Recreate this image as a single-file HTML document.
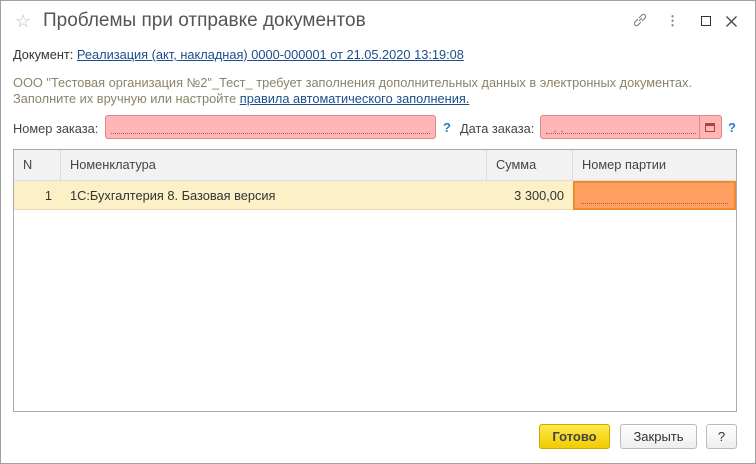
<!DOCTYPE html>
<html><head><meta charset="utf-8"><style>
*{box-sizing:border-box;margin:0;padding:0}
body{width:756px;height:464px;background:#fff;font-family:"Liberation Sans",Arial,sans-serif;font-size:12.8px;color:#333;position:relative;overflow:hidden}
.win{position:absolute;left:0;top:0;width:756px;height:464px;border:1px solid #a0a0a0}
.abs{position:absolute;white-space:nowrap}
a{color:#1c4d8c;text-decoration:underline}
.inp{position:absolute;background:#ffb6b6;border:1px solid #d88;border-radius:3px}
.inp i{position:absolute;left:5px;right:5px;bottom:4px;border-bottom:1px dotted #b55}
.q{color:#2a7fc0;font-weight:bold;font-size:13px}
.tbl{position:absolute;left:13px;top:149px;width:724px;height:263px;border:1px solid #aaa}
.hd{position:absolute;top:0;height:31px;background:#f2f2f2;border-bottom:1px solid #ddd;border-right:1px solid #ddd;line-height:30px;padding-left:9px;color:#444}
.rw{position:absolute;top:31px;height:29px;background:#fbf0c6;border-bottom:1px solid #e6dcb0;line-height:29px;color:#333}
.btn{position:absolute;height:25px;border:1px solid #bbb;border-radius:3px;background:linear-gradient(#fff,#eee);text-align:center;line-height:23px;font-size:13px;color:#333}
</style></head><body>
<div class="win"></div>
<div class="abs" style="left:15px;top:11px;font-size:18px;color:#bbb">☆</div>
<div class="abs" style="left:43px;top:10px;font-size:19px;color:#555">Проблемы при отправке документов</div>
<svg class="abs" style="left:632px;top:12px" width="16" height="16" viewBox="0 0 16 16"><path d="M7 9 L10 6 M6 7 L3 10 a2 2 0 0 0 3 3 L9 10 M10 9 L13 6 a2 2 0 0 0 -3 -3 L7 6" stroke="#777" fill="none"/></svg>
<div class="abs" style="left:671px;top:14px;width:3px;height:13px;background:radial-gradient(circle,#888 1px,transparent 1.3px) 0 0/3px 4.5px"></div>
<div class="abs" style="left:701px;top:16px;width:10px;height:10px;border:1.3px solid #333"></div>
<svg class="abs" style="left:726px;top:16px" width="11" height="11" viewBox="0 0 11 11"><path d="M0.5 0.5L10.5 10.5M10.5 0.5L0.5 10.5" stroke="#444" stroke-width="1.3"/></svg>
<div class="abs" style="left:13px;top:47px;color:#333">Документ: <a>Реализация (акт, накладная) 0000-000001 от 21.05.2020 13:19:08</a></div>
<div class="abs" style="left:13px;top:75px;color:#8a8466;line-height:16px">ООО "Тестовая организация №2"_Тест_ требует заполнения дополнительных данных в электронных документах.<br>Заполните их вручную или настройте <a>правила автоматического заполнения.</a></div>
<div class="abs" style="left:13px;top:121px;color:#444">Номер заказа:</div>
<div class="inp" style="left:105px;top:115px;width:331px;height:24px"><i></i></div>
<div class="abs q" style="left:443px;top:120px">?</div>
<div class="abs" style="left:460px;top:121px;color:#444">Дата заказа:</div>
<div class="inp" style="left:540px;top:115px;width:182px;height:24px"><i style="right:25px"></i><span class="abs" style="left:12px;top:4px;color:#b55">. .</span><div class="abs" style="right:0;top:0;width:22px;height:22px;border-left:1px solid #d88"></div><div class="abs" style="right:6px;top:7px;width:10px;height:9px;border:1.5px solid #a44;border-top-width:3px"></div></div>
<div class="abs q" style="left:728px;top:120px">?</div>
<div class="tbl">
<div class="hd" style="left:0;width:47px">N</div>
<div class="hd" style="left:47px;width:426px">Номенклатура</div>
<div class="hd" style="left:473px;width:86px">Сумма</div>
<div class="hd" style="left:559px;width:163px;border-right:none">Номер партии</div>
<div class="rw" style="left:0;width:47px;text-align:right;padding-right:9px">1</div>
<div class="rw" style="left:47px;width:426px;padding-left:9px">1С:Бухгалтерия 8. Базовая версия</div>
<div class="rw" style="left:473px;width:86px;text-align:right;padding-right:9px">3 300,00</div>
<div class="rw" style="left:559px;width:163px;background:#ffa060;border:2px solid #f08a30"><i class="abs" style="left:6px;right:6px;bottom:4px;border-bottom:1px dotted #a55"></i></div>
</div>
<div class="btn" style="left:539px;top:424px;width:71px;background:linear-gradient(#ffe94a,#f2cc00);border-color:#c9a800;font-weight:bold;color:#444">Готово</div>
<div class="btn" style="left:620px;top:424px;width:77px">Закрыть</div>
<div class="btn" style="left:706px;top:424px;width:31px">?</div>
</body></html>
